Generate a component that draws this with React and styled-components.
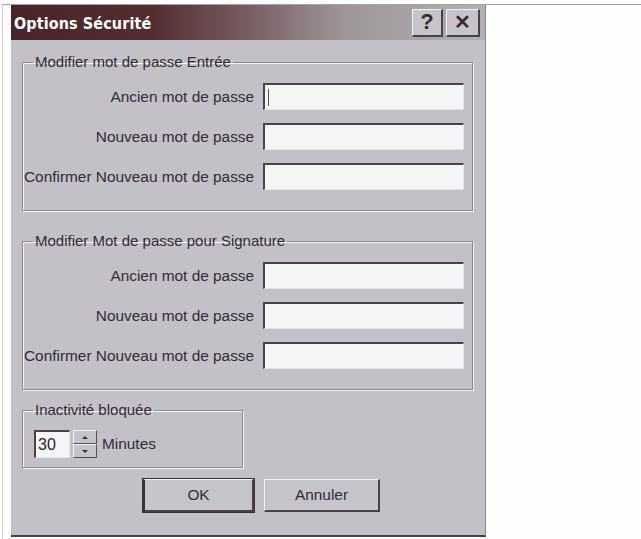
import React from "react";
import styled, { createGlobalStyle } from "styled-components";

const Global = createGlobalStyle`
  html, body { margin: 0; padding: 0; background: #ffffff; }
  body { font-family: "Liberation Sans", Arial, sans-serif; }
  * { box-sizing: border-box; }
`;

const Page = styled.div`
  width: 641px;
  height: 539px;
  padding-top: 4px;
  overflow: hidden;
  background: #fefefe;
`;

const Sheet = styled.div`
  height: 535px;
  margin-left: 2px;
  border-top: 1px solid #a4a2a6;
  border-left: 1px solid #d9ccd0;
  padding-left: 8px;
`;

const Window = styled.div`
  width: 475px;
  height: 532px;
  background: #c3c1c7;
  border-right: 1px solid #8a8690;
  border-bottom: 2px solid #4a3c48;
  display: flex;
  flex-direction: column;
`;

const TitleBar = styled.div`
  height: 35px;
  display: flex;
  align-items: center;
  padding: 0 5px 0 3px;
  background: linear-gradient(90deg, #4a2527 0%, #532e31 30%, #75595d 48%, #9d9599 70%, #b3afb4 100%);
`;

const Title = styled.div`
  flex: 1;
  color: #ffffff;
  font-family: "DejaVu Sans Condensed", "DejaVu Sans", sans-serif;
  font-weight: bold;
  font-size: 16px;
  letter-spacing: 0.1px;
  padding-top: 1px;
`;

const CaptionButton = styled.div`
  width: ${(p) => p.$w}px;
  height: 28px;
  margin-left: ${(p) => p.$gap}px;
  background: #c6c4ca;
  border-top: 1px solid #f2f1f4;
  border-left: 1px solid #f2f1f4;
  border-right: 2px solid #4a4048;
  border-bottom: 2px solid #4a4048;
  display: flex;
  align-items: center;
  justify-content: center;
  color: #3a2a34;
  font-family: "Liberation Sans", Arial, sans-serif;
  font-weight: bold;
  font-size: ${(p) => p.$size}px;
  line-height: 1;
`;

const Body = styled.div`
  flex: 1;
  padding: 14px 13px 0 11px;
  display: flex;
  flex-direction: column;
  align-items: flex-start;
`;

const Group = styled.fieldset`
  margin: ${(p) => p.$mt}px 0 0 0;
  width: ${(p) => p.$w}px;
  padding: ${(p) => p.$pt}px 9px ${(p) => p.$pb}px 1px;
  border: 1px solid #8d8990;
  box-shadow: inset 1px 1px 0 #f3f2f5, 1px 1px 0 #f3f2f5;
  min-width: 0;
`;

const Legend = styled.legend`
  margin-left: 9px;
  padding: 0 2px;
  height: 16px;
  line-height: 16px;
  font-size: 15px;
  color: #35293a;
  font-family: "Liberation Sans", Arial, sans-serif;
`;

const Rows = styled.div`
  display: grid;
  grid-template-columns: 1fr 201px;
  column-gap: 9px;
  row-gap: 13px;
  align-items: center;
`;

const Label = styled.div`
  text-align: right;
  font-size: 15.4px;
  color: #35293a;
  white-space: nowrap;
`;

const Field = styled.div`
  height: 27px;
  background: #f5f5f7;
  border-top: 2px solid #4c4149;
  border-left: 2px solid #4c4149;
  border-right: 1px solid #e4e3e8;
  border-bottom: 1px solid #e4e3e8;
  display: flex;
  align-items: center;
  padding-left: 3px;
  font-size: 15px;
  color: #2a2228;
`;

const Caret = styled.span`
  width: 1px;
  height: 17px;
  background: #5a4a52;
`;

const SpinRow = styled.div`
  display: flex;
  align-items: center;
  padding-left: 10px;
`;

const SpinField = styled(Field)`
  width: 36px;
  height: 28px;
  padding-left: 2px;
  font-size: 16px;
`;

const SpinButtons = styled.div`
  margin-left: 3px;
  width: 24px;
  height: 28px;
  display: flex;
  flex-direction: column;
`;

const SpinHalf = styled.div`
  flex: 1;
  background: #c6c4ca;
  border-top: 1px solid #f2f1f4;
  border-left: 1px solid #f2f1f4;
  border-right: 1px solid #5a4e58;
  border-bottom: 1px solid #5a4e58;
  display: flex;
  align-items: center;
  justify-content: center;
`;

const Arrow = styled.span`
  width: 0;
  height: 0;
  border-left: 3px solid transparent;
  border-right: 3px solid transparent;
  ${(p) =>
    p.$up
      ? "border-bottom: 3px solid #3a2e38;"
      : "border-top: 3px solid #3a2e38;"}
`;

const Unit = styled.span`
  margin-left: 5px;
  font-size: 15.4px;
  color: #35293a;
`;

const ButtonRow = styled.div`
  margin-top: 11px;
  padding-left: 121px;
  display: flex;
  gap: 10px;
`;

const Button = styled.div`
  width: ${(p) => p.$w}px;
  height: 33px;
  background: #c6c4ca;
  border-top: 1px solid #f2f1f4;
  border-left: 1px solid #f2f1f4;
  border-right: 2px solid #4a4048;
  border-bottom: 2px solid #4a4048;
  ${(p) => p.$default && "outline: 1px solid #3a3038; outline-offset: 0; border-left-color: #3a3038; border-left-width: 2px;"}
  display: flex;
  align-items: center;
  justify-content: center;
  font-size: 15.4px;
  color: #35293a;
`;

const PasswordGroup = ({ title, mt, caret }) => (
  <Group $mt={mt} $w={451} $pt={13} $pb={20}>
    <Legend>{title}</Legend>
    <Rows>
      <Label>Ancien mot de passe</Label>
      <Field>{caret && <Caret />}</Field>
      <Label>Nouveau mot de passe</Label>
      <Field />
      <Label>Confirmer Nouveau mot de passe</Label>
      <Field />
    </Rows>
  </Group>
);

export default function App() {
  return (
    <>
      <Global />
      <Page>
        <Sheet>
          <Window>
            <TitleBar>
              <Title>Options Sécurité</Title>
              <CaptionButton $w={31} $gap={0} $size={22}>?</CaptionButton>
              <CaptionButton $w={34} $gap={3} $size={20}>✕</CaptionButton>
            </TitleBar>
            <Body>
              <PasswordGroup title="Modifier mot de passe Entrée" mt={0} caret />
              <PasswordGroup title="Modifier Mot de passe pour Signature" mt={22} />
              <Group $mt={12} $w={221} $pt={12} $pb={9}>
                <Legend>Inactivité bloquée</Legend>
                <SpinRow>
                  <SpinField>30</SpinField>
                  <SpinButtons>
                    <SpinHalf><Arrow $up /></SpinHalf>
                    <SpinHalf><Arrow /></SpinHalf>
                  </SpinButtons>
                  <Unit>Minutes</Unit>
                </SpinRow>
              </Group>
              <ButtonRow>
                <Button $w={111} $default>OK</Button>
                <Button $w={116}>Annuler</Button>
              </ButtonRow>
            </Body>
          </Window>
        </Sheet>
      </Page>
    </>
  );
}
